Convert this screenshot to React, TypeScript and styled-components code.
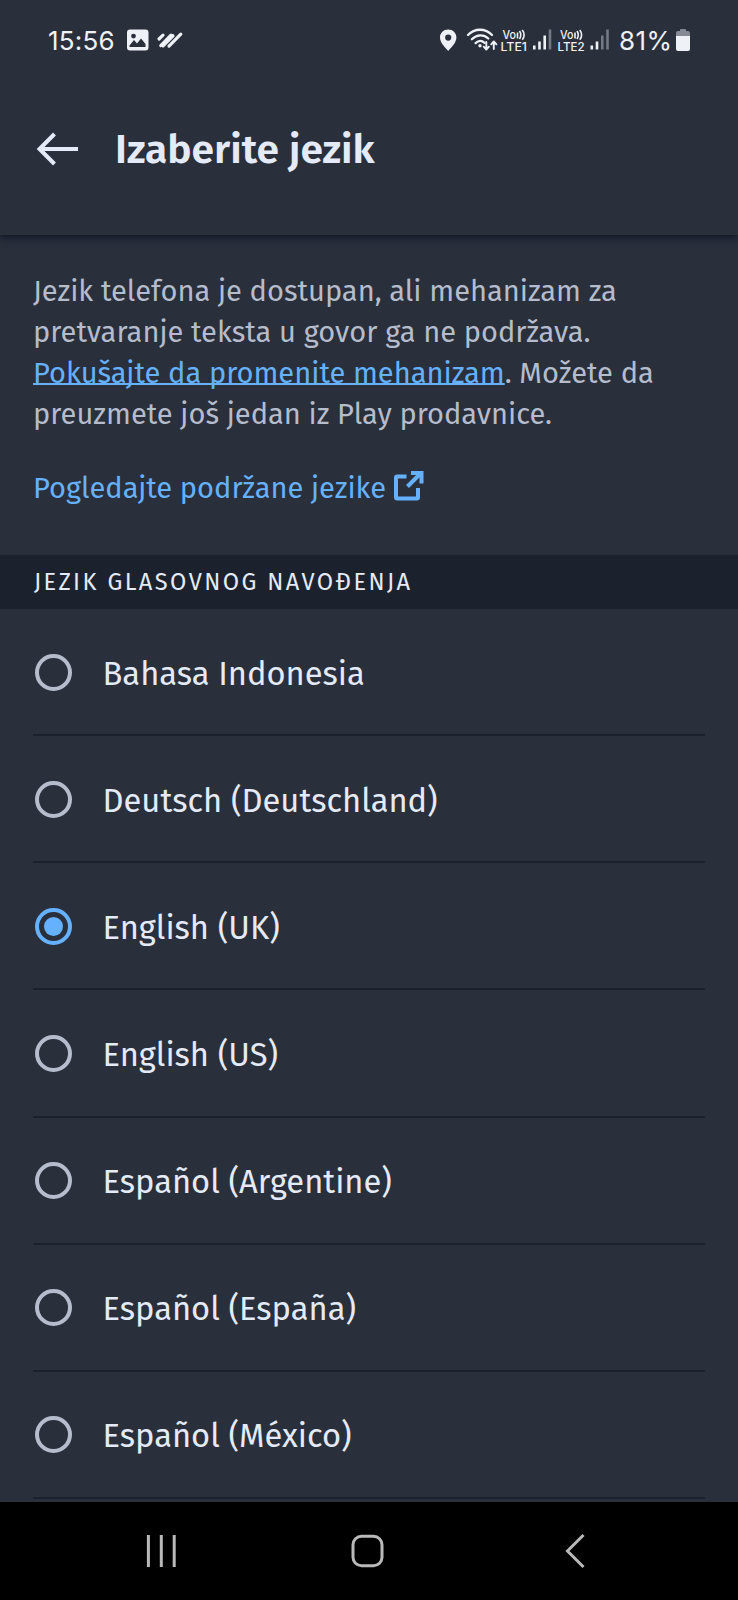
import React from "react";
import styled, { createGlobalStyle } from "styled-components";

const color = {
  surface: "#292f3b",
  sunken: "#1c222d",
  text: "#e4eaf8",
  muted: "#b5bccc",
  link: "#66b1ff",
  status: "#eef1f6",
  nav: "#b9b9b9",
};

const GlobalStyle = createGlobalStyle`
  * { box-sizing: border-box; }
  body { margin: 0; background: ${color.surface}; }
`;

const Screen = styled.div`
  display: flex;
  flex-direction: column;
  width: 738px;
  height: 1600px;
  overflow: hidden;
  background: ${color.surface};
  color: ${color.text};
  font-family: "Fira Sans", "Noto Sans", sans-serif;
`;

const Header = styled.header`
  flex: none;
  height: 235px;
  box-shadow: 0 3px 7px 0 rgba(12, 18, 34, 0.8);
`;

const StatusBar = styled.div`
  display: flex;
  justify-content: space-between;
  height: 80px;
  padding: 0 48px 0 47px;
  color: ${color.status};
  font-family: Inter, Roboto, sans-serif;
`;

const StatusGroup = styled.div`
  display: flex;
  align-items: center;
  svg { display: block; flex: none; }
`;

const StatusText = styled.span<{ $width: number; $indent: number; $spacing: number }>`
  flex: none;
  width: ${(p) => p.$width}px;
  padding: 2px 0 0 ${(p) => p.$indent}px;
  font-size: 26px;
  line-height: 80px;
  letter-spacing: ${(p) => p.$spacing}px;
  white-space: nowrap;
`;

const TitleBar = styled.div`
  display: flex;
  align-items: center;
  height: 138px;
  padding-left: 36px;
`;

const BackButton = styled.button`
  display: flex;
  width: 79px;
  padding: 0;
  border: 0;
  background: none;
  color: inherit;
`;

const Title = styled.h1`
  margin: 0;
  padding-top: 2px;
  font-size: 40.8px;
  font-weight: 600;
  line-height: 54px;
  white-space: nowrap;
`;

const Intro = styled.section`
  flex: none;
  height: 320px;
  padding: 36px 33px 0;
  font-size: 29.05px;
  line-height: 41.1px;
  color: ${color.muted};
`;

const Paragraph = styled.p`
  margin: 0 0 33px;
`;

const Line = styled.span`
  display: block;
  white-space: nowrap;
`;

const InlineLink = styled.a`
  color: ${color.link};
  text-decoration: underline;
  text-decoration-thickness: 2px;
  text-underline-offset: 0;
  text-decoration-skip-ink: none;
`;

const ExternalLink = styled.a`
  display: flex;
  align-items: flex-start;
  gap: 8px;
  color: ${color.link};
  text-decoration: none;
  svg { margin-top: 1.500px; }
`;

const SectionTitle = styled.h2`
  flex: none;
  height: 54px;
  margin: 0;
  padding-left: 34px;
  background: ${color.sunken};
  font-size: 23.6px;
  font-weight: 400;
  line-height: 54px;
  letter-spacing: 2.4px;
  white-space: nowrap;
`;

const Options = styled.div`
  flex: 1;
  min-height: 0;
  overflow: hidden;
  padding: 0 33px;
`;

const Option = styled.label`
  display: flex;
  align-items: center;
  height: 127.15px;
  padding: 1px 0 0 2px;
  border-bottom: 2px solid ${color.sunken};
`;

const Radio = styled.span<{ $checked: boolean }>`
  display: grid;
  place-items: center;
  width: 37px;
  height: 37px;
  margin-right: 30.5px;
  border: 4px solid ${(p) => (p.$checked ? color.link : color.muted)};
  border-radius: 50%;
  &::after {
    content: "";
    width: 19px;
    height: 19px;
    border-radius: 50%;
    background: ${(p) => (p.$checked ? color.link : "transparent")};
  }
`;

const OptionName = styled.span`
  padding-top: 4px;
  font-size: 32.7px;
  line-height: 45px;
  white-space: nowrap;
`;

const NavBar = styled.nav`
  flex: none;
  height: 98px;
  background: #000;
  svg { display: block; }
`;

const options = [
  { name: "Bahasa Indonesia" },
  { name: "Deutsch (Deutschland)" },
  { name: "English (UK)", checked: true },
  { name: "English (US)" },
  { name: "Español (Argentine)" },
  { name: "Español (España)" },
  { name: "Español (México)" },
];

const LeftIcons = () => (
  <svg width="60" height="30" viewBox="125 25.500 60 30" fill="none">
    <path fillRule="evenodd" fill={color.status} d="M130 30h15.500a3 3 0 0 1 3 3v15a3 3 0 0 1-3 3h-15.500a3 3 0 0 1-3-3v-15a3 3 0 0 1 3-3ZM129.500 47.500h16v-3l-4.500-5.500-4 5-3-3.500-4.500 5.500ZM133.500 34.200a2.400 2.400 0 1 0 0 4.800 2.400 2.400 0 0 0 0-4.800Z" />
    <g stroke={color.status} strokeWidth="3.200" strokeLinecap="round">
      <path d="M159 39.500l4-3.800M160.800 46L171 35.600M163 46.400L173 36.300M169 46.600L180.800 34.700" />
    </g>
  </svg>
);

const SystemIcons = () => (
  <svg width="176" height="34" viewBox="438 23.500 176 34" fill="none">
    <path fillRule="evenodd" fill={color.status} d="M448.200 30c-4.600 0-8.200 3.500-8.200 8 0 5.500 5 9.500 8.200 13.500 3.200-4 8.200-8 8.200-13.500 0-4.500-3.600-8-8.200-8Zm0 5a3.100 3.100 0 1 1 0 6.200 3.100 3.100 0 0 1 0-6.200Z" />
    <g stroke={color.status} strokeWidth="2.300" strokeLinecap="round" strokeLinejoin="round">
      <path d="M468 35.500c6.500-7 17.500-7 24 0M471.800 39.800c5-5 12-5 16.500-.8M475.600 43.600c2.900-2.700 6.300-2.700 9-.3" />
      <path strokeWidth="1.900" d="M486.300 42.500v7.300m-2.600-2.600 2.600 2.800 2.600-2.800M493.800 49.500v-7.300m-2.600 2.600 2.600-2.800 2.600 2.800" />
    </g>
    <circle cx="480" cy="46.300" r="1.700" fill={color.status} />
    <g fill={color.status} fontFamily="Inter, Roboto, sans-serif" fontWeight="500" fontSize="11.600">
      <text x="502.500" y="39" textLength="13.500" lengthAdjust="spacingAndGlyphs">Vo</text>
      <text x="500.500" y="51" textLength="26.500" lengthAdjust="spacingAndGlyphs">LTE1</text>
      <text x="560" y="39" textLength="13.500" lengthAdjust="spacingAndGlyphs">Vo</text>
      <text x="557.500" y="51" textLength="27" lengthAdjust="spacingAndGlyphs">LTE2</text>
    </g>
    <g stroke={color.status} strokeWidth="1.600">
      <path d="M517.500 33v6M519.500 31.500q2.600 4 0 8M522.300 30.500q3.600 5 0 9.700M575 33v6M577 31.500q2.600 4 0 8M579.800 30.500q3.600 5 0 9.700" />
    </g>
    <g strokeWidth="2.600">
      <path stroke={color.status} d="M534.300 46v4M539.500 42v8M544.700 36v14M591.800 46v4M597 42v8" />
      <path stroke="#747985" d="M550 30v20M602.300 36v14M607.500 30v20" />
    </g>
  </svg>
);

const Battery = () => (
  <svg width="14" height="24" viewBox="0 0 14 24">
    <path fill="#858a94" d="M4 2q0-1 1-1h4q1 0 1 1v1h2q2 0 2 2v4H0V5q0-2 2-2h2Z" />
    <path fill={color.status} d="M0 8h14v13q0 2-2 2H2q-2 0-2-2Z" />
  </svg>
);

export default function App() {
  return (
    <Screen>
      <GlobalStyle />
      <Header>
        <StatusBar>
          <StatusGroup>
            <StatusText $width={78} $indent={1} $spacing={0.2}>15:56</StatusText>
            <LeftIcons />
          </StatusGroup>
          <StatusGroup>
            <SystemIcons />
            <StatusText $width={62} $indent={5} $spacing={0.4}>81%</StatusText>
            <Battery />
          </StatusGroup>
        </StatusBar>
        <TitleBar>
          <BackButton aria-label="Nazad">
            <svg width="44" height="36" viewBox="0 0 44 36" fill="none" stroke="currentColor" strokeWidth="4">
              <path d="M42 18H4M18.500 3L3.500 18l15 15" />
            </svg>
          </BackButton>
          <Title>Izaberite jezik</Title>
        </TitleBar>
      </Header>
      <Intro>
        <Paragraph>
          <Line>Jezik telefona je dostupan, ali mehanizam za</Line>
          <Line>pretvaranje teksta u govor ga ne podržava.</Line>
          <Line>
            <InlineLink>Pokušajte da promenite mehanizam</InlineLink>. Možete da
          </Line>
          <Line>preuzmete još jedan iz Play prodavnice.</Line>
        </Paragraph>
        <ExternalLink>
          <Line>Pogledajte podržane jezike</Line>
          <svg width="30" height="31" viewBox="0 0 30 31" fill="none" stroke="currentColor" strokeWidth="4">
            <path d="M12.500 6.500H3.300q-1.300 0-1.300 1.300v19.400q0 1.300 1.300 1.300h19.400q1.300 0 1.300-1.300V18" />
            <path d="M13.500 16.500L26 4" />
            <path fill="currentColor" stroke="none" d="M17 1h12.500v12.500h-4V5H17Z" />
          </svg>
        </ExternalLink>
      </Intro>
      <SectionTitle>JEZIK GLASOVNOG NAVOĐENJA</SectionTitle>
      <Options>
        {options.map((o) => (
          <Option key={o.name}>
            <Radio $checked={!!o.checked} />
            <OptionName>{o.name}</OptionName>
          </Option>
        ))}
      </Options>
      <NavBar>
        <svg width="738" height="98" viewBox="0 1502 738 98" fill="none" stroke={color.nav} strokeWidth="3">
          <path d="M148.400 1535v32M161.300 1535v32M174.200 1535v32" />
          <rect x="353" y="1536.300" width="29" height="29.500" rx="8.500" />
          <path d="M583.500 1535l-16 16 16 16" />
        </svg>
      </NavBar>
    </Screen>
  );
}
